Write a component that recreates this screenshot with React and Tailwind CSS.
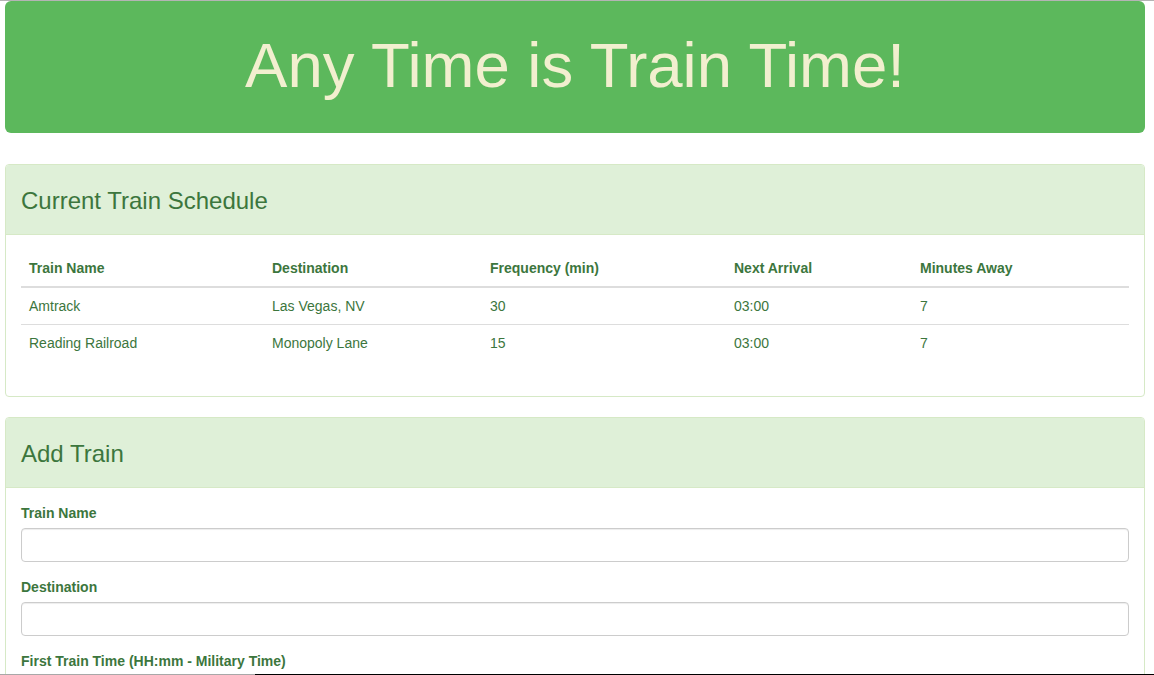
import React from "react";

const rows = [
  ["Amtrack", "Las Vegas, NV", "30", "03:00", "7"],
  ["Reading Railroad", "Monopoly Lane", "15", "03:00", "7"],
];

const cols = [
  { label: "Train Name", w: "w-[243px]" },
  { label: "Destination", w: "w-[218px]" },
  { label: "Frequency (min)", w: "w-[244px]" },
  { label: "Next Arrival", w: "w-[186px]" },
  { label: "Minutes Away", w: "w-[217px]" },
];

function Field({ label }) {
  return (
    <div className="mb-[15px]">
      <label className="block mb-[5px] font-bold text-[14px] leading-[20px]">{label}</label>
      <input
        type="text"
        className="block w-full h-[34px] rounded-[4px] border border-[#cccccc] bg-white px-[12px] shadow-[inset_0_1px_1px_rgba(0,0,0,0.075)] outline-none"
      />
    </div>
  );
}

export default function App() {
  return (
    <div
      className="relative min-h-[675px] bg-white text-[#3c763d] text-[14px] leading-[20px]"
      style={{ fontFamily: '"Liberation Sans", Arial, Helvetica, sans-serif' }}
    >
      <div className="h-px bg-[#b4b4b4]" />
      <div className="mx-[5px] w-[1140px]">
        <div className="h-[132px] rounded-[6px] bg-[#5cb85c] flex items-center justify-center">
          <h1 className="text-[63.5px] leading-none text-[#f2efcf] mb-[3px]">Any Time is Train Time!</h1>
        </div>

        <div className="mt-[31px] rounded-[4px] border border-[#d6e9c6] bg-white">
          <div className="h-[70px] rounded-t-[3px] bg-[#dff0d8] border-b border-[#d6e9c6] px-[15px] pt-[2px] flex items-center">
            <h3 className="text-[24px] leading-[26px]">Current Train Schedule</h3>
          </div>
          <div className="p-[15px]">
            <table className="w-full mb-[20px] border-collapse text-left">
              <thead>
                <tr>
                  {cols.map((c) => (
                    <th
                      key={c.label}
                      className={`${c.w} p-[8px] font-bold border-b-2 border-[#dddddd] align-bottom`}
                    >
                      {c.label}
                    </th>
                  ))}
                </tr>
              </thead>
              <tbody>
                {rows.map((r, i) => (
                  <tr key={i}>
                    {r.map((v, j) => (
                      <td
                        key={j}
                        className={`p-[8px] ${i > 0 ? "border-t border-[#dddddd]" : ""}`}
                      >
                        {v}
                      </td>
                    ))}
                  </tr>
                ))}
              </tbody>
            </table>
          </div>
        </div>

        <div className="mt-[20px] rounded-[4px] border border-[#d6e9c6] bg-white">
          <div className="h-[70px] rounded-t-[3px] bg-[#dff0d8] border-b border-[#d6e9c6] px-[15px] pt-[2px] flex items-center">
            <h3 className="text-[24px] leading-[26px]">Add Train</h3>
          </div>
          <div className="p-[15px]">
            <Field label="Train Name" />
            <Field label="Destination" />
            <Field label="First Train Time (HH:mm - Military Time)" />
            <Field label="Frequency (min)" />
            <button className="rounded-[4px] bg-[#5cb85c] border border-[#4cae4c] text-white px-[12px] py-[6px]">
              Submit
            </button>
          </div>
        </div>
        <div className="h-[20px]" />
      </div>

      <div className="absolute left-0 top-[674px] w-full h-px flex">
        <div className="w-[255px] bg-[#a8a8a8]" />
        <div className="flex-1 bg-black" />
      </div>
    </div>
  );
}
